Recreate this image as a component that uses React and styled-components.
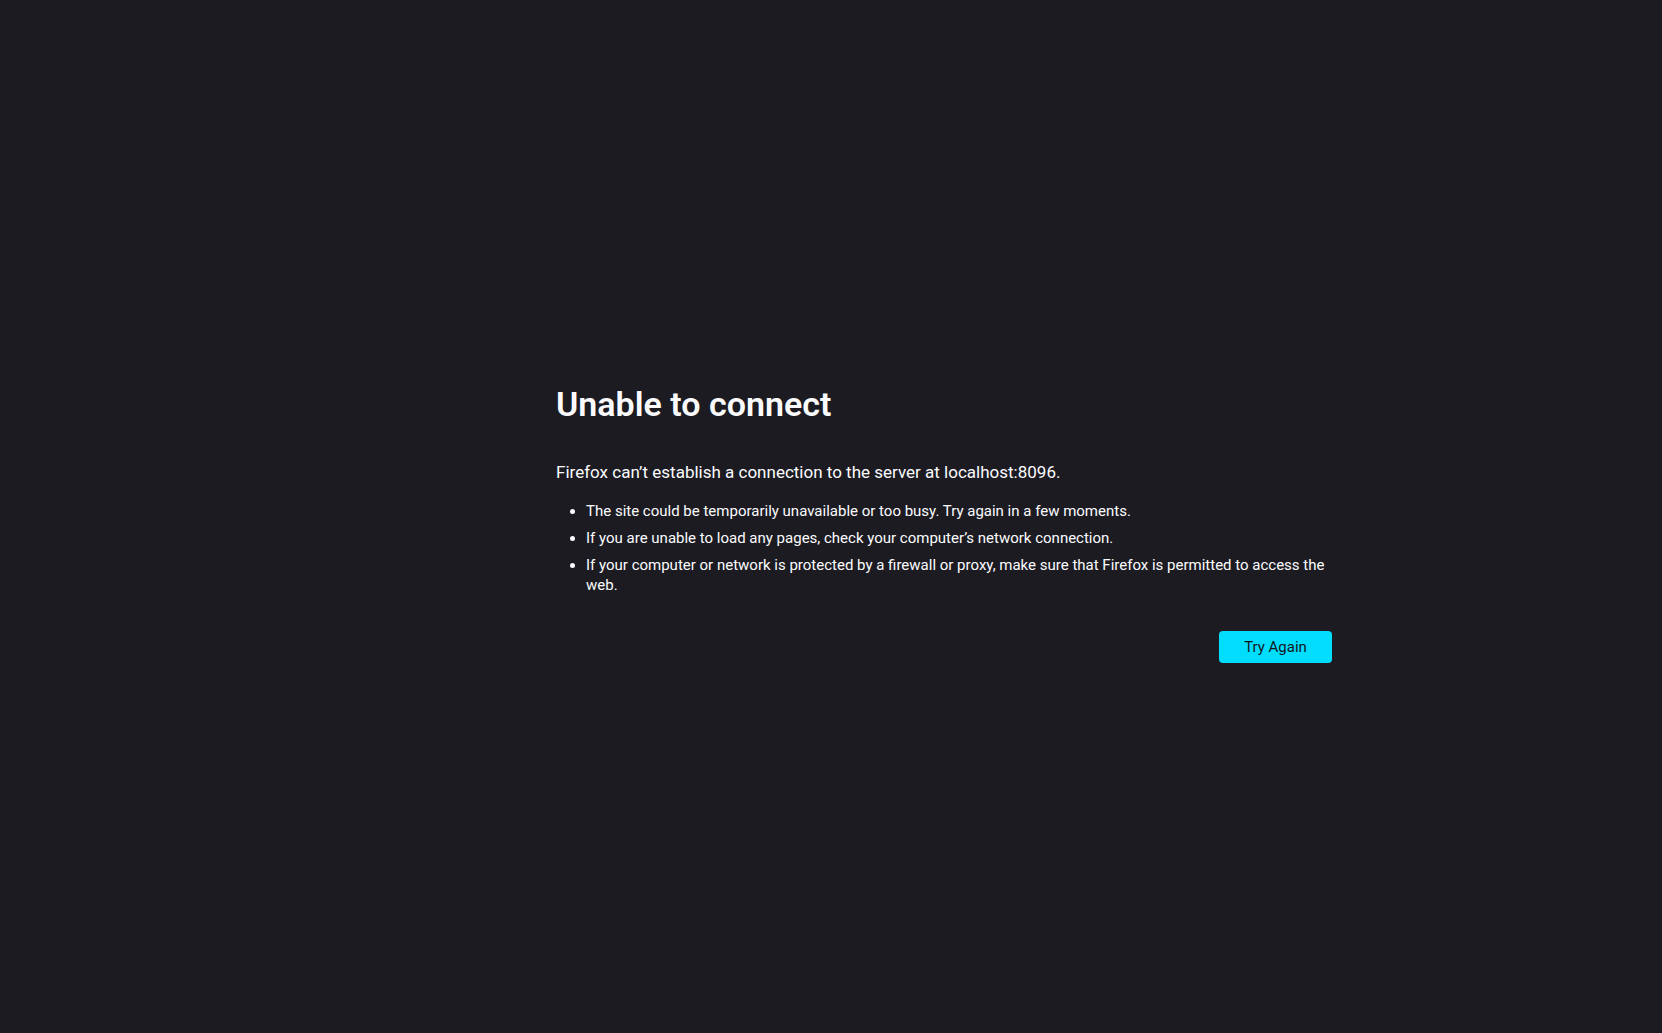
import React from 'react';
import styled, { createGlobalStyle } from 'styled-components';

const GlobalStyle = createGlobalStyle`
  html,
  body {
    margin: 0;
    background: #1c1b22;
  }

  body {
    color: #fbfbfe;
    font-family: Roboto, 'Noto Sans', sans-serif;
  }
`;

const Page = styled.main`
  min-height: 100vh;
  box-sizing: border-box;
  padding: 382px 0 0 556px;
`;

const Container = styled.div`
  width: 776px;
`;

const Title = styled.h1`
  margin: 0;
  font-size: 34px;
  line-height: 44px;
  font-weight: 600;
`;

const Description = styled.p`
  margin: 35px 0 0;
  font-size: 17px;
  line-height: 22px;
`;

const Hints = styled.ul`
  margin: 18px 0 0;
  padding-left: 30px;
  font-size: 15px;
  line-height: 20px;

  li + li {
    margin-top: 7px;
  }
`;

const ButtonRow = styled.div`
  display: flex;
  justify-content: flex-end;
  margin-top: 36px;
`;

const Button = styled.button`
  width: 113px;
  height: 32px;
  border: none;
  border-radius: 4px;
  background: #00ddff;
  color: #15141a;
  font-family: inherit;
  font-size: 15px;
  font-weight: 400;
  cursor: pointer;
`;

const hints = [
  'The site could be temporarily unavailable or too busy. Try again in a few moments.',
  'If you are unable to load any pages, check your computer’s network connection.',
  'If your computer or network is protected by a firewall or proxy, make sure that Firefox is permitted to access the web.',
];

const App = () => (
  <>
    <GlobalStyle />
    <Page>
      <Container>
        <Title>Unable to connect</Title>
        <Description>
          Firefox can’t establish a connection to the server at localhost:8096.
        </Description>
        <Hints>
          {hints.map((text) => (
            <li key={text}>{text}</li>
          ))}
        </Hints>
        <ButtonRow>
          <Button type="button">Try Again</Button>
        </ButtonRow>
      </Container>
    </Page>
  </>
);

export default App;
